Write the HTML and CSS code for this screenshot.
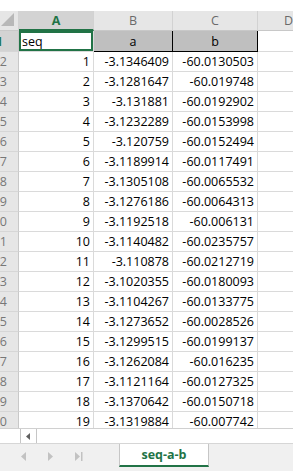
FILE: index.html
```html
<!DOCTYPE html>
<html lang="en">
<head>
    <meta charset="UTF-8">
    <meta name="viewport" content="width=device-width, initial-scale=1.0">
    <title>seq-a-b</title>
    <link rel="stylesheet" href="styles.css">
</head>
<body>

<div class="sheet">
    <div class="grid">
        <!-- column headers -->
        <div class="hd corner">
            <svg width="14" height="14" viewBox="0 0 14 14"><polygon points="13,0 13,13 0,13" fill="#b8b8b8"/></svg>
        </div>
        <div class="hd col sel">A</div>
        <div class="hd col">B</div>
        <div class="hd col">C</div>
        <div class="hd col">D</div>

        <!-- row 1 -->
        <div class="rh sel">1</div>
        <div class="c txt active">seq</div>
        <div class="c head-cell">a</div>
        <div class="c head-cell">b</div>
        <div class="c"></div>

        <div class="rh">2</div><div class="c num">1</div><div class="c num">-3.1346409</div><div class="c num">-60.0130503</div><div class="c"></div>
        <div class="rh">3</div><div class="c num">2</div><div class="c num">-3.1281647</div><div class="c num">-60.019748</div><div class="c"></div>
        <div class="rh">4</div><div class="c num">3</div><div class="c num">-3.131881</div><div class="c num">-60.0192902</div><div class="c"></div>
        <div class="rh">5</div><div class="c num">4</div><div class="c num">-3.1232289</div><div class="c num">-60.0153998</div><div class="c"></div>
        <div class="rh">6</div><div class="c num">5</div><div class="c num">-3.120759</div><div class="c num">-60.0152494</div><div class="c"></div>
        <div class="rh">7</div><div class="c num">6</div><div class="c num">-3.1189914</div><div class="c num">-60.0117491</div><div class="c"></div>
        <div class="rh">8</div><div class="c num">7</div><div class="c num">-3.1305108</div><div class="c num">-60.0065532</div><div class="c"></div>
        <div class="rh">9</div><div class="c num">8</div><div class="c num">-3.1276186</div><div class="c num">-60.0064313</div><div class="c"></div>
        <div class="rh">10</div><div class="c num">9</div><div class="c num">-3.1192518</div><div class="c num">-60.006131</div><div class="c"></div>
        <div class="rh">11</div><div class="c num">10</div><div class="c num">-3.1140482</div><div class="c num">-60.0235757</div><div class="c"></div>
        <div class="rh">12</div><div class="c num">11</div><div class="c num">-3.110878</div><div class="c num">-60.0212719</div><div class="c"></div>
        <div class="rh">13</div><div class="c num">12</div><div class="c num">-3.1020355</div><div class="c num">-60.0180093</div><div class="c"></div>
        <div class="rh">14</div><div class="c num">13</div><div class="c num">-3.1104267</div><div class="c num">-60.0133775</div><div class="c"></div>
        <div class="rh">15</div><div class="c num">14</div><div class="c num">-3.1273652</div><div class="c num">-60.0028526</div><div class="c"></div>
        <div class="rh">16</div><div class="c num">15</div><div class="c num">-3.1299515</div><div class="c num">-60.0199137</div><div class="c"></div>
        <div class="rh">17</div><div class="c num">16</div><div class="c num">-3.1262084</div><div class="c num">-60.016235</div><div class="c"></div>
        <div class="rh">18</div><div class="c num">17</div><div class="c num">-3.1121164</div><div class="c num">-60.0127325</div><div class="c"></div>
        <div class="rh">19</div><div class="c num">18</div><div class="c num">-3.1370642</div><div class="c num">-60.0150718</div><div class="c"></div>
        <div class="rh">20</div><div class="c num">19</div><div class="c num">-3.1319884</div><div class="c num">-60.007742</div><div class="c"></div>
    </div>

    <div class="hscroll">
        <div class="hs-gap"></div>
        <div class="hs-btn">
            <svg width="5" height="7" viewBox="0 0 5 7"><polygon points="4,0 4,7 0,3.5" fill="#606060"/></svg>
        </div>
        <div class="hs-track"></div>
    </div>

    <div class="tabs">
        <div class="tab-nav">
            <svg width="6" height="9" viewBox="0 0 6 9"><polygon points="5,0 5,9 0,4.5" fill="#c2c2c2"/></svg>
            <svg width="6" height="9" viewBox="0 0 6 9"><polygon points="0,0 0,9 5,4.5" fill="#c2c2c2"/></svg>
            <svg width="8" height="9" viewBox="0 0 8 9"><polygon points="0,0 0,9 5,4.5" fill="#c2c2c2"/><rect x="6" y="0" width="1.5" height="9" fill="#c2c2c2"/></svg>
        </div>
        <div class="tab">seq-a-b</div>
    </div>
</div>

</body>
</html>
```

FILE: styles.css
```css
body {
    margin: 0;
    background: #ffffff;
    font-family: "Open Sans", "Liberation Sans", sans-serif;
    color: #000;
}
.sheet {
    width: 293px;
    height: 471px;
    padding-top: 11px;
    box-sizing: border-box;
    overflow: hidden;
}
.grid {
    display: grid;
    grid-template-columns: 19px 75px 79px 85px 62px;
    grid-template-rows: 20px 21px repeat(19, 20px);
    width: 293px;
    height: 417px;
    overflow: hidden;
}
.grid > div {
    box-sizing: border-box;
    border-right: 1px solid #dadada;
    border-bottom: 1px solid #dadada;
    display: flex;
    align-items: center;
    font-size: 12.5px;
    white-space: nowrap;
    overflow: hidden;
}
.hd {
    background: #e6e6e6;
    color: #6a6a6a;
    justify-content: center;
    border-right-color: #d2d2d2 !important;
    border-bottom-color: #c8c8c8 !important;
}
.hd.sel {
    background: #d3d3d3;
    color: #217346;
    font-weight: bold;
    border-bottom: 2px solid #217346 !important;
}
.corner {
    align-items: flex-end !important;
    justify-content: flex-end !important;
    padding: 0 3px 3px 0;
}
.rh {
    background: #e6e6e6;
    color: #777;
    justify-content: flex-end;
    padding-right: 11px;
    border-right-color: #c8c8c8 !important;
    border-bottom-color: #d6d6d6 !important;
}
.rh.sel {
    background: #d3d3d3;
    color: #217346;
    font-weight: bold;
    padding-right: 15px;
}
.c {
    padding: 0 3px;
}
.num {
    justify-content: flex-end;
}
.txt {
    justify-content: flex-start;
}
.active {
    box-shadow: inset 0 0 0 2px #217346;
    padding-left: 3px;
}
.head-cell {
    background: #bfbfbf;
    justify-content: center;
    border-right: 1px solid #000 !important;
    border-bottom: 1px solid #000 !important;
}
.hscroll {
    display: flex;
    height: 15px;
    box-sizing: border-box;
    border-top: 1px solid #d0d0d0;
}
.hs-gap {
    width: 20px;
}
.hs-btn {
    width: 17px;
    box-sizing: border-box;
    border-left: 1px solid #c6c6c6;
    border-right: 1px solid #c6c6c6;
    display: flex;
    align-items: center;
    justify-content: center;
}
.hs-track {
    flex: 1;
}
.tabs {
    display: flex;
    height: 28px;
    background: #f0f0f0;
    border-top: 1px solid #d6d6d6;
    box-sizing: border-box;
}
.tab-nav {
    width: 119px;
    display: flex;
    align-items: center;
    gap: 21px;
    padding-left: 21px;
    box-sizing: border-box;
    padding-bottom: 2px;
}
.tab {
    width: 90px;
    height: 23px;
    box-sizing: border-box;
    background: #ffffff;
    border-left: 1px solid #c6c6c6;
    border-right: 1px solid #c6c6c6;
    border-bottom: 2px solid #217346;
    color: #217346;
    font-weight: bold;
    font-size: 12.5px;
    display: flex;
    align-items: center;
    justify-content: center;
}
```
